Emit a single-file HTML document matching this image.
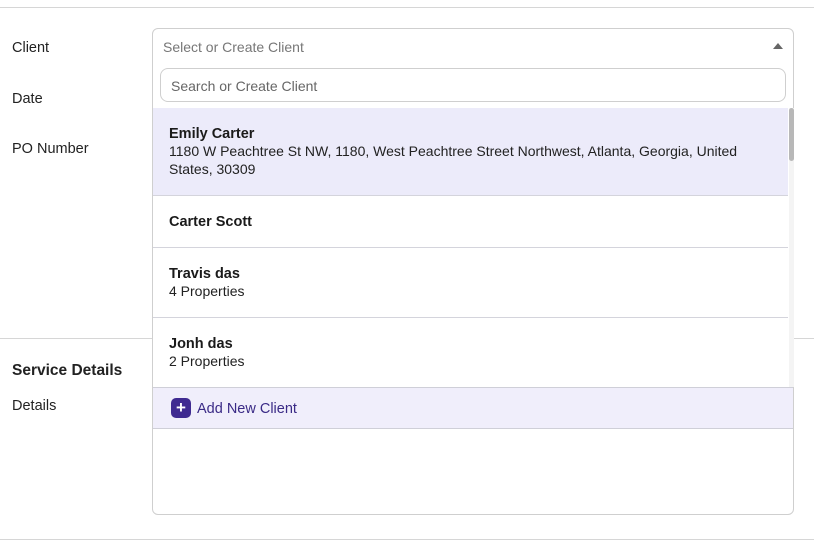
<!DOCTYPE html>
<html><head><style>
body{margin:0;width:814px;height:541px;background:#fff;font-family:"Liberation Sans",sans-serif;color:#1f1f1f;position:relative;overflow:hidden}
.a{position:absolute}
.hl{position:absolute;height:1px;background:#d6d6d6}
.lbl{position:absolute;left:12px;font-size:14.5px;color:#222}
.item{position:absolute;left:153px;width:635px;border-bottom:1px solid #d4d4dc;box-sizing:border-box;padding-left:16px;padding-right:20px}
.n{font-weight:bold;font-size:14.5px;color:#1a1a1a}
.s{font-size:14px;color:#222;line-height:18px}
</style></head><body>
<div class="hl" style="left:0;top:7px;width:814px"></div>
<div class="hl" style="left:0;top:338px;width:814px"></div>
<div class="hl" style="left:0;top:539px;width:814px"></div>
<div class="lbl" style="top:40px">Client</div>
<div class="lbl" style="top:91px">Date</div>
<div class="lbl" style="top:141px">PO Number</div>
<div class="lbl" style="top:362px;font-weight:bold;font-size:15.5px">Service Details</div>
<div class="lbl" style="top:398px">Details</div>
<div class="a" style="left:152px;top:28px;width:642px;height:487px;border:1px solid #cfcfcf;border-radius:6px;box-sizing:border-box;background:#fff"></div>
<div class="a" style="left:163px;top:39px;font-size:14px;color:#777">Select or Create Client</div>
<div class="a" style="left:773px;top:43px;width:0;height:0;border-left:5px solid transparent;border-right:5px solid transparent;border-bottom:6px solid #666"></div>
<div class="a" style="left:160px;top:68px;width:626px;height:34px;border:1px solid #cfcfcf;border-radius:8px;box-sizing:border-box;padding:9px 10px;font-size:14px;color:#666">Search or Create Client</div>
<div class="item" style="top:108px;height:88px;background:#ecebfa;padding-top:18px"><div class="n">Emily Carter</div><div class="s">1180 W Peachtree St NW, 1180, West Peachtree Street Northwest, Atlanta, Georgia, United States, 30309</div></div>
<div class="item" style="top:196px;height:52px;padding-top:18px"><div class="n">Carter Scott</div></div>
<div class="item" style="top:248px;height:70px;padding-top:18px"><div class="n">Travis das</div><div class="s">4 Properties</div></div>
<div class="item" style="top:318px;height:70px;padding-top:18px;border-bottom:none"><div class="n">Jonh das</div><div class="s">2 Properties</div></div>
<div class="a" style="left:153px;top:387px;width:640px;height:42px;background:#f0eefb;border-top:1px solid #cfcfd8;border-bottom:1px solid #cfcfd8;box-sizing:border-box"></div>
<div class="a" style="left:171px;top:398px;width:20px;height:20px;background:#3f2a91;border-radius:5px;color:#fff;font-weight:bold;font-size:17px;line-height:20px;text-align:center">+</div>
<div class="a" style="left:197px;top:401px;font-size:14.5px;color:#3a2a86">Add New Client</div>
<div class="a" style="left:789px;top:108px;width:5px;height:279px;background:#f4f4f4"></div>
<div class="a" style="left:789px;top:108px;width:5px;height:53px;background:#b8b8b8;border-radius:3px"></div>
</body></html>
